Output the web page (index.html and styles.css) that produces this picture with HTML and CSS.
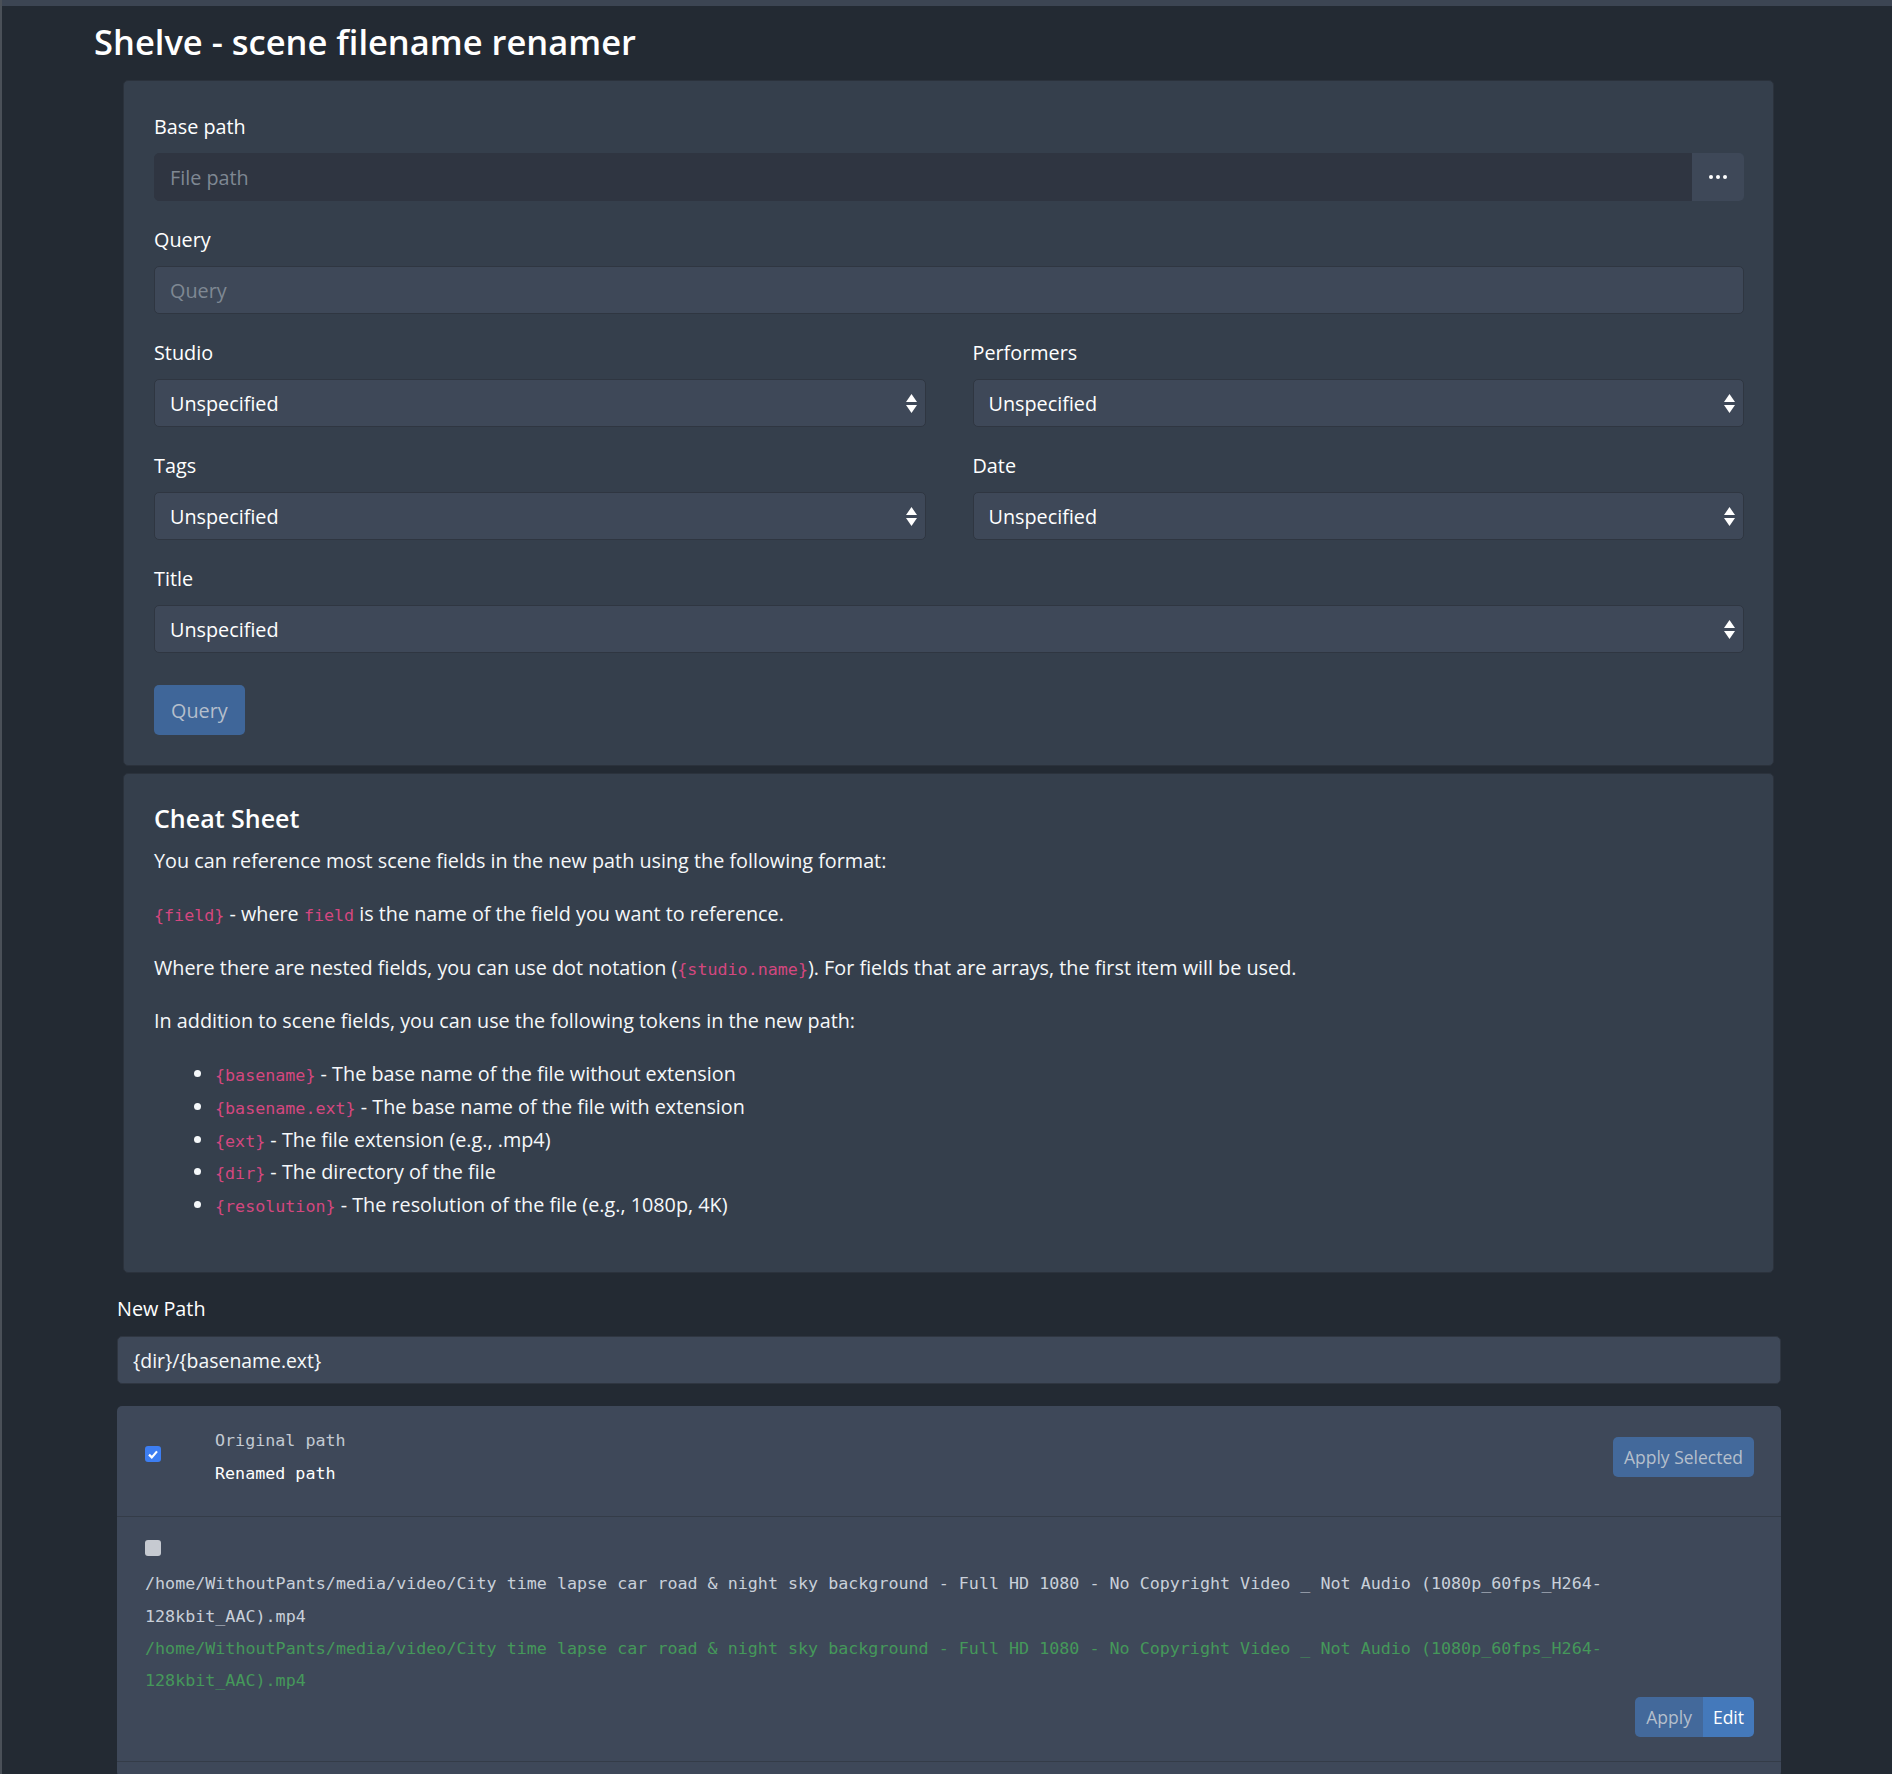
FILE: index.html
```html
<!DOCTYPE html>
<html lang="en">
<head>
<meta charset="utf-8">
<title>Shelve - scene filename renamer</title>
<link rel="stylesheet" href="styles.css">
</head>
<body>
<div class="topbar"></div>
<h1 class="page-title">Shelve - scene filename renamer</h1>
<div class="container">
  <div class="card form-card">
    <div class="group">
      <label class="label">Base path</label>
      <div class="input-group">
        <input class="control control-dark" type="text" placeholder="File path">
        <button class="btn-more" type="button" aria-label="Browse">
          <svg width="18" height="4" viewBox="0 0 18 4"><circle cx="2" cy="2" r="2" fill="#fff"/><circle cx="9" cy="2" r="2" fill="#fff"/><circle cx="16" cy="2" r="2" fill="#fff"/></svg>
        </button>
      </div>
    </div>
    <div class="group">
      <label class="label">Query</label>
      <input class="control" type="text" placeholder="Query">
    </div>
    <div class="grid2">
      <div class="group">
        <label class="label">Studio</label>
        <div class="select"><span>Unspecified</span><svg class="caret" width="11" height="19" viewBox="0 0 11 19"><path d="M0 8 L5.5 0 L11 8 Z M0 11 L11 11 L5.5 19 Z" fill="#fff"/></svg></div>
      </div>
      <div class="group">
        <label class="label">Performers</label>
        <div class="select"><span>Unspecified</span><svg class="caret" width="11" height="19" viewBox="0 0 11 19"><path d="M0 8 L5.5 0 L11 8 Z M0 11 L11 11 L5.5 19 Z" fill="#fff"/></svg></div>
      </div>
      <div class="group">
        <label class="label">Tags</label>
        <div class="select"><span>Unspecified</span><svg class="caret" width="11" height="19" viewBox="0 0 11 19"><path d="M0 8 L5.5 0 L11 8 Z M0 11 L11 11 L5.5 19 Z" fill="#fff"/></svg></div>
      </div>
      <div class="group">
        <label class="label">Date</label>
        <div class="select"><span>Unspecified</span><svg class="caret" width="11" height="19" viewBox="0 0 11 19"><path d="M0 8 L5.5 0 L11 8 Z M0 11 L11 11 L5.5 19 Z" fill="#fff"/></svg></div>
      </div>
    </div>
    <div class="group">
      <label class="label">Title</label>
      <div class="select"><span>Unspecified</span><svg class="caret" width="11" height="19" viewBox="0 0 11 19"><path d="M0 8 L5.5 0 L11 8 Z M0 11 L11 11 L5.5 19 Z" fill="#fff"/></svg></div>
    </div>
    <button class="btn btn-query" type="button">Query</button>
  </div>

  <div class="card cheat-card">
    <h4 class="cheat-title">Cheat Sheet</h4>
    <p>You can reference most scene fields in the new path using the following format:</p>
    <p><code>{field}</code> - where <code>field</code> is the name of the field you want to reference.</p>
    <p>Where there are nested fields, you can use dot notation (<code>{studio.name}</code>). For fields that are arrays, the first item will be used.</p>
    <p>In addition to scene fields, you can use the following tokens in the new path:</p>
    <ul>
      <li><code>{basename}</code> - The base name of the file without extension</li>
      <li><code>{basename.ext}</code> - The base name of the file with extension</li>
      <li><code>{ext}</code> - The file extension (e.g., .mp4)</li>
      <li><code>{dir}</code> - The directory of the file</li>
      <li><code>{resolution}</code> - The resolution of the file (e.g., 1080p, 4K)</li>
    </ul>
  </div>

  <div class="newpath">
    <label class="label">New Path</label>
    <input class="control" type="text" value="{dir}/{basename.ext}">
  </div>

  <div class="results">
    <div class="results-head">
      <span class="check checked head-check"><svg width="10" height="9" viewBox="0 0 10 9"><path d="M1 4.6 L3.8 7.4 L9 1.4" fill="none" stroke="#fff" stroke-width="2.2"/></svg></span>
      <div class="head-paths">
        <div class="orig-label">Original path</div>
        <div class="new-label">Renamed path</div>
      </div>
      <button class="btn btn-sm btn-muted" type="button">Apply Selected</button>
    </div>
    <div class="result-row">
      <span class="check"></span>
      <div class="path path-orig">/home/WithoutPants/media/video/City time lapse car road &amp; night sky background - Full HD 1080 - No Copyright Video _ Not Audio (1080p_60fps_H264-128kbit_AAC).mp4</div>
      <div class="path path-new">/home/WithoutPants/media/video/City time lapse car road &amp; night sky background - Full HD 1080 - No Copyright Video _ Not Audio (1080p_60fps_H264-128kbit_AAC).mp4</div>
      <div class="row-actions">
        <button class="btn btn-sm btn-muted btn-left" type="button">Apply</button><button class="btn btn-sm btn-edit btn-right" type="button">Edit</button>
      </div>
    </div>
    <div class="result-row-next"></div>
  </div>
</div>
</body>
</html>
```
FILE: styles.css
```css
* { box-sizing: border-box; }
html, body { margin: 0; padding: 0; }
body {
  background: #232a33;
  color: #f5f8fa;
  font-family: "Open Sans", "Noto Sans", sans-serif;
  font-size: 19.8px;
  border-left: 2px solid #4a5058;
  min-height: 1774px;
}
.topbar { height: 6px; background: #3c4553; }
.page-title {
  margin: 14px 0 17px 92px;
  font-size: 34.5px;
  line-height: 43px;
  font-weight: 600;
  color: #fff;
}
.container { margin-left: 115px; width: 1664px; }
.card {
  background: #353f4c;
  border: 1px solid #2b323c;
  border-radius: 5px;
  margin: 0 7px 0 6px;
  padding: 28px 29px 30px 30px;
}
.group { margin-bottom: 21px; }
.label { display: block; line-height: 30px; padding-top: 3px; margin-bottom: 11px; color: #fff; }
.control {
  display: block;
  width: 100%;
  height: 48px;
  padding: 0 15px;
  font: inherit;
  color: #f5f8fa;
  background: #3e4858;
  border: 1px solid #2f3641;
  border-radius: 5px;
  outline: none;
}
.control::placeholder { color: #7f8893; }
.control-dark { background: #2f3541; border-color: #2f3541; border-radius: 5px 0 0 5px; }
.input-group { display: flex; }
.input-group .control { flex: 1; }
.btn-more {
  width: 52px;
  height: 48px;
  border: none;
  background: #3e4858;
  border-radius: 0 5px 5px 0;
  display: flex;
  align-items: center;
  justify-content: center;
  padding: 0;
}
.grid2 { display: grid; grid-template-columns: 1fr 1fr; column-gap: 47px; }
.select {
  height: 48px;
  display: flex;
  align-items: center;
  justify-content: space-between;
  padding: 0 8px 0 15px;
  background: #3e4858;
  border: 1px solid #2f3641;
  border-radius: 5px;
  color: #fff;
}
.caret { display: block; }
.btn {
  font: inherit;
  border: none;
  border-radius: 5px;
  cursor: pointer;
}
.btn-query {
  margin-top: 32px;
  height: 50px;
  padding: 0 17px;
  background: #3f6699;
  color: #b5bfcc;
  display: block;
}
.cheat-card { margin-top: 7px; padding-top: 29px; }
.cheat-title {
  margin: 0 0 11px;
  font-size: 25px;
  line-height: 31px;
  font-weight: 600;
  color: #fff;
}
.cheat-card p { margin: 0 0 20.5px; line-height: 32.75px; }
.cheat-card ul { margin: 0 0 20.5px; padding-left: 61px; line-height: 32.75px; }
code {
  font-family: "DejaVu Sans Mono", "Liberation Mono", monospace;
  font-size: 16.7px;
  line-height: 1;
  color: #d4477f;
}
.newpath { margin-top: 18px; }
.newpath .label { margin-bottom: 12px; }
.newpath .control { font-size: 19.4px; }
.results {
  margin-top: 22px;
  background: #3e4859;
  border-radius: 5px;
}
.results-head {
  display: flex;
  align-items: center;
  padding: 18px 27px 26px 28px;
  border-bottom: 1px solid #343c48;
}
.check {
  width: 16px;
  height: 16px;
  border-radius: 3px;
  background: #c6cad1;
  display: flex;
  align-items: center;
  justify-content: center;
  flex: none;
}
.check.checked { background: #3d7ef2; }
.head-check { margin-bottom: 6px; }
.head-paths {
  margin-left: 54px;
  font-family: "DejaVu Sans Mono", "Liberation Mono", monospace;
  font-size: 16.7px;
  line-height: 33px;
}
.orig-label { color: #c3cad3; }
.new-label { color: #fff; }
.btn-sm {
  font-size: 17.5px;
  height: 40px;
  padding: 0 10px;
}
.btn-muted { background: #43699b; color: #b5bfcc; }
.results-head .btn-sm { margin-left: auto; padding: 0 11px; }
.result-row {
  padding: 23px 27px 24px 28px;
  border-bottom: 1px solid #343c48;
}
.result-row .check { margin-bottom: 11px; }
.path {
  font-family: "DejaVu Sans Mono", "Liberation Mono", monospace;
  font-size: 16.7px;
  line-height: 32.4px;
}
.path-orig { color: #c9d0d9; }
.path-new { color: #45985a; }
.row-actions { display: flex; justify-content: flex-end; }
.btn-left { border-radius: 5px 0 0 5px; padding: 0 11px; }
.btn-right { border-radius: 0 5px 5px 0; padding: 0 10px; }
.btn-edit { background: #4479bb; color: #fff; }
.result-row-next { height: 15px; }
```
